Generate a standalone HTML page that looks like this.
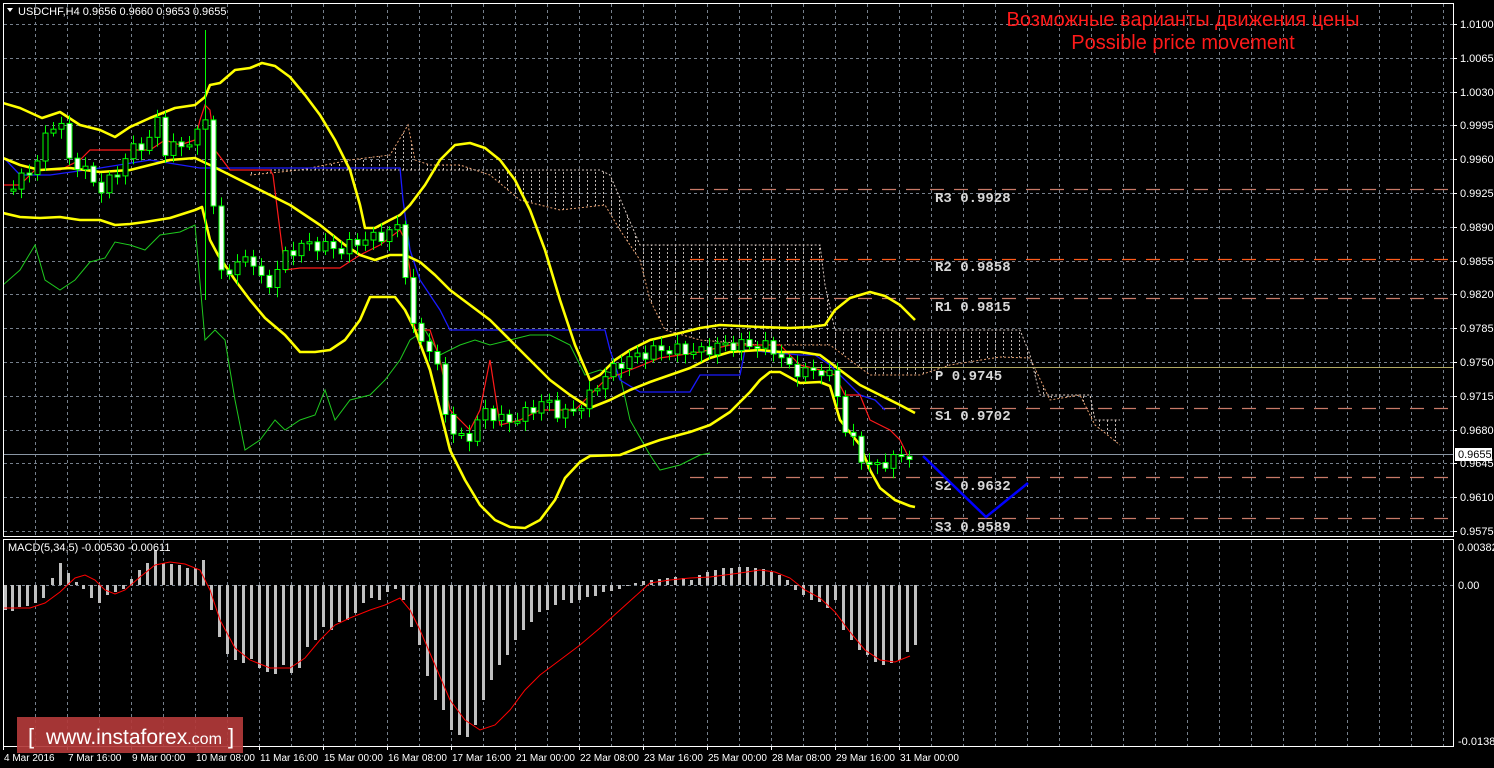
<!DOCTYPE html>
<html><head><meta charset="utf-8"><style>
html,body{margin:0;padding:0;background:#000;width:1494px;height:768px;overflow:hidden}
svg{display:block}
text{font-family:"Liberation Sans",sans-serif}
.mono{font-family:"Liberation Mono",monospace;font-size:14px;font-weight:bold;fill:#d8d8d8}
</style></head><body>
<svg id="s" width="1494" height="768" viewBox="0 0 1494 768" xmlns="http://www.w3.org/2000/svg">
<defs>
<pattern id="cl" width="8" height="4" patternUnits="userSpaceOnUse">
<rect x="3" y="0" width="1" height="2" fill="#bfb6b0"/>
</pattern>
<clipPath id="mainclip"><rect x="4" y="4" width="1449" height="532"/></clipPath>
<clipPath id="macdclip"><rect x="4" y="540" width="1449" height="206"/></clipPath>
</defs>
<g id="grid" stroke="#76808c" stroke-width="1" stroke-dasharray="3,3"></g>
<g id="cloud" clip-path="url(#mainclip)"></g>
<g id="pivots"></g>
<g id="ind" clip-path="url(#mainclip)" fill="none"></g>
<g id="candles" clip-path="url(#mainclip)"></g>
<g id="macd" clip-path="url(#macdclip)"></g>
<rect x="3.5" y="3.5" width="1450" height="533" fill="none" stroke="#fff" stroke-width="1"/>
<rect x="3.5" y="539.5" width="1450" height="207" fill="none" stroke="#fff" stroke-width="1"/>
<g id="axis" fill="#fff" font-size="11"></g>
<polygon points="7,8 13,8 10,12" fill="#fff"/>
<text x="18" y="15" font-size="11" fill="#fff">USDCHF,H4  0.9656 0.9660 0.9653 0.9655</text>
<text x="8" y="551" font-size="11" fill="#fff">MACD(5,34,5) -0.00530 -0.00611</text>
<text x="1183" y="26" font-size="20" fill="#ff1a1a" text-anchor="middle">Возможные варианты движения цены</text>
<text x="1183" y="49" font-size="20" fill="#ff1a1a" text-anchor="middle">Possible price movement</text>
<text class="mono" x="935" y="202">R3 0.9928</text>
<text class="mono" x="935" y="271">R2 0.9858</text>
<text class="mono" x="935" y="311">R1 0.9815</text>
<text class="mono" x="935" y="380"> P 0.9745</text>
<text class="mono" x="935" y="420">S1 0.9702</text>
<text class="mono" x="935" y="490">S2 0.9632</text>
<text class="mono" x="935" y="531">S3 0.9589</text>
<polyline points="923,456 986,517 1028,483" fill="none" stroke="#0000ff" stroke-width="2.5"/>
<rect x="17" y="717" width="226" height="36" fill="#b23a3a" opacity="0.92"/>
<text x="28" y="744" font-size="22" fill="#fff">[ </text>
<text x="46" y="744" font-size="21" fill="#fff">www.instaforex<tspan font-size="16">.com</tspan></text>
<text x="228" y="744" font-size="22" fill="#fff">]</text>
</svg>
<script>
var NS="http://www.w3.org/2000/svg";
function el(p,t,a){var e=document.createElementNS(NS,t);for(var k in a)e.setAttribute(k,a[k]);document.getElementById(p).appendChild(e);return e;}
function pts(a){var s=[];for(var i=0;i<a.length;i+=2)s.push(a[i]+","+a[i+1]);return s.join(" ");}
function interp(a,x){for(var i=0;i<a.length-2;i+=2){if(x<=a[i+2]){var t=(x-a[i])/(a[i+2]-a[i]);return a[i+1]+t*(a[i+3]-a[i+1]);}}return a[a.length-1];}
for(var x=35;x<1453;x+=32){el("grid","line",{x1:x+.5,y1:4,x2:x+.5,y2:536});el("grid","line",{x1:x+.5,y1:540,x2:x+.5,y2:746});}
for(var i=0;i<16;i++){var y=Math.round(24+i*33.8)+.5;el("grid","line",{x1:4,y1:y,x2:1453,y2:y});}
el("grid","line",{x1:4,y1:585.5,x2:1453,y2:585.5});
var pr=["1.0100","1.0065","1.0030","0.9995","0.9960","0.9925","0.9890","0.9855","0.9820","0.9785","0.9750","0.9715","0.9680","0.9645","0.9610","0.9575"];
for(var i=0;i<16;i++){var y=Math.round(24+i*33.8);var t=el("axis","text",{x:1460,y:y+4});t.textContent=pr[i];el("axis","rect",{x:1454,y:y,width:3,height:1});}
[["0.00382",547],["0.00",585],["-0.01383",741]].forEach(function(a){var t=el("axis","text",{x:1458,y:a[1]+4});t.textContent=a[0];});
var dl=["4 Mar 2016","7 Mar 16:00","9 Mar 00:00","10 Mar 08:00","11 Mar 16:00","15 Mar 00:00","16 Mar 08:00","17 Mar 16:00","21 Mar 00:00","22 Mar 08:00","23 Mar 16:00","25 Mar 00:00","28 Mar 08:00","29 Mar 16:00","31 Mar 00:00"];
for(var i=0;i<dl.length;i++){var x=3+64*i;var t=el("axis","text",{x:x+1,y:761,"font-size":"10"});t.textContent=dl[i];el("axis","rect",{x:x,y:746,width:1,height:4});}
el("axis","rect",{x:1455,y:448,width:37,height:13,fill:"#fff"});
var bt=el("axis","text",{x:1458,y:458,fill:"#000"});bt.textContent="0.9655";
var A=[250,175,300,170,350,160,390,155,408,125,415,160,430,165,460,165,490,175,520,200,560,210,605,205,620,230,640,260,650,300,665,330,700,340,760,345,800,345,830,345,870,375,920,375,950,365,1000,357,1030,358,1050,400,1080,395,1095,425,1120,445];
var B=[250,170,600,170,610,175,640,245,820,245,825,285,835,330,1020,330,1030,355,1040,395,1090,395,1095,420,1120,420];
var poly=[];for(var i=0;i<A.length;i+=2)poly.push(A[i]+","+A[i+1]);for(var i=B.length-2;i>=0;i-=2)poly.push(B[i]+","+B[i+1]);
el("cloud","polygon",{points:poly.join(" "),fill:"url(#cl)"});
el("cloud","polyline",{points:pts(A),fill:"none",stroke:"#e8a070","stroke-dasharray":"2,2"});
el("cloud","polyline",{points:pts(B),fill:"none",stroke:"#d8c8c0","stroke-dasharray":"2,2"});
[[189,"#c87a68"],[259,"#ff5a1a"],[298,"#c87a68"],[408,"#c87a68"],[477,"#c87a68"],[518,"#c87a68"]].forEach(function(p){el("pivots","line",{x1:690,y1:p[0]+.5,x2:1453,y2:p[0]+.5,stroke:p[1],"stroke-width":1.3,"stroke-dasharray":"14,10"});});
el("pivots","line",{x1:690,y1:367.5,x2:1453,y2:367.5,stroke:"#b0a860","stroke-width":1});
el("pivots","line",{x1:4,y1:454.5,x2:1453,y2:454.5,stroke:"#8a96a4","stroke-width":1});
var G=[3,285,20,270,35,245,45,280,60,290,75,280,90,262,105,258,115,242,130,245,145,250,160,235,180,232,195,225,205,340,215,330,225,340,235,400,245,450,260,440,275,420,285,430,300,420,315,415,325,390,335,420,350,400,370,395,385,380,400,360,410,340,425,330,440,355,460,345,475,340,490,345,510,340,530,335,550,335,570,345,585,375,600,370,620,375,630,420,650,455,660,470,680,465,700,455,710,453];
el("ind","polyline",{points:pts(G),stroke:"#1ec81e","stroke-width":1});
var K=[3,157,20,175,50,175,100,168,150,160,200,168,260,168,400,168,403,200,410,250,420,280,440,310,450,330,605,330,610,350,620,380,640,392,690,392,700,375,740,375,745,350,800,355,815,355,830,365,845,380,860,395,875,400,885,410];
el("ind","polyline",{points:pts(K),stroke:"#1a1aff","stroke-width":1.3});
var T=[3,185,20,185,35,170,60,170,80,160,90,150,150,150,165,140,180,145,195,140,200,120,205,105,210,110,215,150,230,170,270,170,273,175,285,270,300,268,340,268,360,255,380,245,400,230,405,240,410,270,415,330,430,330,440,360,450,410,470,430,480,410,490,360,500,425,520,420,540,410,575,410,590,395,605,380,630,370,660,358,700,352,730,345,780,345,800,365,820,370,835,375,845,395,860,395,870,420,890,430,900,440,910,460];
el("ind","polyline",{points:pts(T),stroke:"#ff1a1a","stroke-width":1.2});
var U=[3,103,20,108,42,118,60,112,80,125,100,130,115,137,130,127,150,118,175,108,195,105,205,97,210,85,220,83,235,70,250,68,262,63,275,66,290,77,305,95,320,115,335,140,350,170,360,205,365,228,375,228,390,220,400,215,410,205,425,185,440,160,455,145,470,143,485,148,500,160,515,180,530,210,545,250,560,300,575,345,590,380,600,375,615,360,630,350,650,340,680,333,700,328,720,325,760,327,790,328,810,327,825,325,835,310,850,298,870,292,885,296,900,305,915,320];
var M=[3,158,20,165,40,170,70,168,100,172,130,170,150,165,170,160,195,158,210,165,230,175,260,190,290,205,320,225,345,245,360,255,375,260,390,255,405,255,420,262,435,275,450,290,470,305,490,320,510,340,530,360,550,380,570,395,590,408,610,400,630,390,650,382,670,375,690,368,710,358,730,352,760,350,780,352,800,352,820,355,840,370,860,385,880,395,900,405,915,413];
var L=[3,213,20,217,40,218,60,217,80,220,100,220,115,225,130,224,145,222,170,218,195,210,202,207,210,240,218,255,235,280,250,300,265,318,285,335,300,352,315,352,330,350,345,340,360,320,370,297,395,297,405,310,415,330,430,370,440,410,450,450,465,480,480,505,495,520,510,527,525,528,540,520,555,500,565,478,580,462,590,456,620,455,640,447,660,440,690,432,710,425,730,412,750,392,760,380,770,372,780,372,800,383,820,382,830,386,840,420,860,445,870,470,880,488,895,500,910,506,915,507];
[U,M,L].forEach(function(a){el("ind","polyline",{points:pts(a),stroke:"#ffff00","stroke-width":2.6,"stroke-linejoin":"round"});});
var P=[5,190,20,180,35,165,50,125,60,120,67,160,80,165,100,190,115,175,130,150,150,140,160,110,165,150,180,145,195,140,205,115,212,170,215,280,225,270,240,265,250,250,258,280,270,285,280,260,300,245,320,245,340,250,360,240,385,235,400,225,408,300,415,340,425,340,435,360,445,410,455,440,470,435,485,410,500,420,515,420,530,410,545,400,560,415,575,410,590,395,605,375,625,360,640,355,655,350,680,350,700,352,720,345,740,345,760,345,775,350,790,370,810,372,825,370,835,385,845,430,855,445,865,465,875,467,890,460,905,455,915,455];
var prevC=interp(P,5);
for(var i=1;i<=113;i++){var cx=5+8*i;var c=interp(P,cx)+6*Math.sin(i*2.3);var o=prevC;prevC=c;
 var hi=Math.min(o,c)-3-6*Math.abs(Math.sin(i*1.7)),lo=Math.max(o,c)+3+7*Math.abs(Math.cos(i*1.3));
 if(i==25){hi=30;lo=300;}
 el("candles","line",{x1:cx+.5,y1:hi,x2:cx+.5,y2:lo,stroke:"#00ff00","stroke-width":1});
 var bTop=Math.min(o,c),bh=Math.max(2,Math.abs(c-o));
 el("candles","rect",{x:cx-2,y:bTop,width:5,height:bh,fill:(c>o?"#fff":"#000"),stroke:"#00ff00","stroke-width":1});
}
var MB=[5,610,12,611,19,607,27,606,35,603,43,598,52,578,60,563,68,573,76,582,83,589,91,598,99,603,107,595,115,592,123,589,131,579,139,570,147,563,155,550,163,563,171,564,179,565,187,568,195,568,203,560,211,610,219,637,227,654,235,660,243,663,251,659,259,668,267,672,275,674,283,665,291,673,299,668,307,647,315,640,323,627,331,630,339,622,347,620,355,613,363,603,371,598,379,600,387,592,395,589,403,600,411,627,419,645,427,676,435,700,443,710,451,730,459,735,467,737,475,725,483,700,491,680,499,665,507,655,515,640,523,630,531,622,539,612,547,610,555,605,563,600,571,603,579,600,587,597,595,596,603,592,611,591,619,589,627,586,635,583,643,581,651,580,659,579,667,578,675,577,683,578,691,580,699,575,707,572,715,570,723,568,731,568,739,567,747,567,755,568,763,569,771,572,779,575,787,580,795,590,803,595,811,600,819,602,827,608,835,600,843,630,851,640,859,650,867,655,875,662,883,665,891,663,899,660,907,652,915,645];
for(var i=0;i<MB.length;i+=2){var my=MB[i+1];el("macd","rect",{x:MB[i]-1,y:Math.min(my,585),width:3,height:Math.abs(my-585)||1,fill:"#c0c0c0"});}
var SG=[3,608,30,608,45,603,60,592,75,578,85,575,95,580,105,590,115,594,125,590,140,577,155,565,170,562,185,564,200,570,210,590,220,620,235,648,250,660,270,668,290,668,305,658,320,640,335,625,350,618,370,610,385,605,400,598,410,610,420,630,435,665,450,700,465,720,480,730,495,725,510,710,525,690,540,675,560,660,580,645,600,628,620,610,640,592,650,583,670,580,690,578,710,577,740,573,760,570,775,572,790,578,805,590,820,598,835,612,850,632,865,650,880,660,895,662,910,656];
el("macd","polyline",{points:pts(SG),fill:"none",stroke:"#ff0000","stroke-width":1});
</script>
</body></html>
